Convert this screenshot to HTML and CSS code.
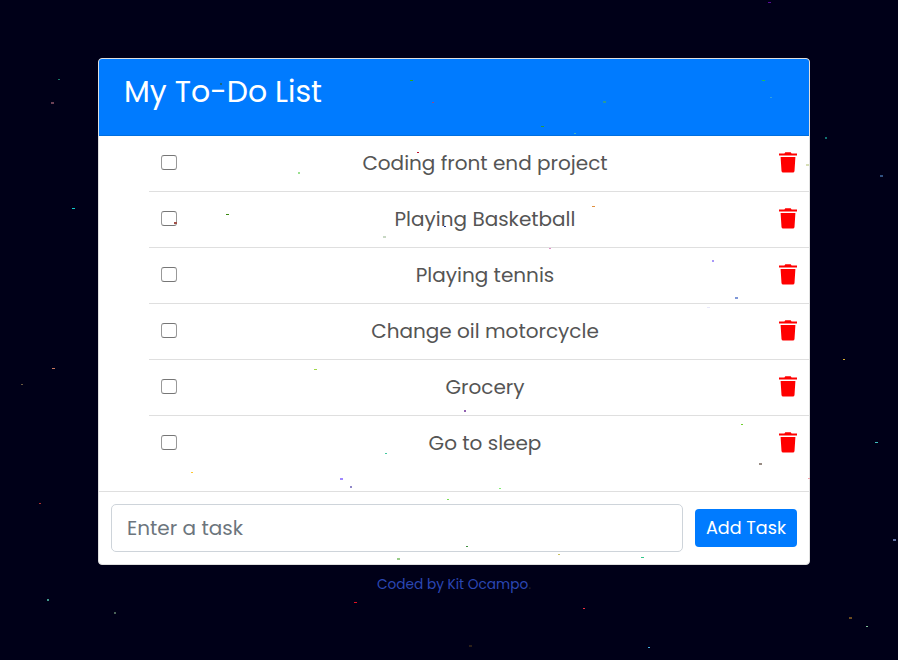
FILE: index.html
```html
<!DOCTYPE html>
<html lang="en">
<head>
<meta charset="utf-8">
<title>My To-Do List</title>
<link rel="stylesheet" href="styles.css">
</head>
<body>
<svg width="0" height="0" class="defs"><symbol id="trash" viewBox="0 0 18 21"><path d="M6.300 .3h5.400l.9 1.200H18v2H0v-2h5.400zM1.600 4.900h14.800l-.9 14q-.1 1.700-1.700 1.700H4.200q-1.600 0-1.700-1.700z"/></symbol></svg>
<main class="card">
  <header class="card-header"><h1>My To-Do List</h1></header>
  <ul class="list">
    <li><input type="checkbox"><span>Coding front end project</span><svg class="trash"><use href="#trash"/></svg></li>
    <li><input type="checkbox"><span>Playing Basketball</span><svg class="trash"><use href="#trash"/></svg></li>
    <li><input type="checkbox"><span>Playing tennis</span><svg class="trash"><use href="#trash"/></svg></li>
    <li><input type="checkbox"><span>Change oil motorcycle</span><svg class="trash"><use href="#trash"/></svg></li>
    <li><input type="checkbox"><span>Grocery</span><svg class="trash"><use href="#trash"/></svg></li>
    <li><input type="checkbox"><span>Go to sleep</span><svg class="trash"><use href="#trash"/></svg></li>
  </ul>
  <form class="card-footer">
    <input class="task" type="text" placeholder="Enter a task">
    <button type="button">Add Task</button>
  </form>
</main>
<p class="credit"><a>Coded by Kit Ocampo</a>.</p>
<svg class="particles" width="898" height="660" shape-rendering="crispEdges">
<path fill="#177a68" d="M58 79h2v1h-2z"/><path fill="#6b4155" d="M51 102h3v2h-3z"/><path fill="#1cc" d="M72 208h3v1h-3z"/><path fill="#3a8a10" d="M226 214h3v1h-3z"/><path fill="#1a6a80" d="M220 83h2v2h-2z"/><path fill="#9be090" d="M298 172h2v2h-2z"/>
<path fill="#3a1" d="M410 80h3v1h-3z"/><path fill="#94488a" d="M432 102h2v1h-2z"/><path fill="#2a9a40" d="M541 126h3v1h-3z"/><path fill="#4bb5b5" d="M574 133h2v1h-2z"/><path fill="#c0102a" d="M417 152h2v1h-2z"/><path fill="#e09040" d="M592 206h3v1h-3z"/>
<path fill="#5a0a9a" d="M768 2h3v1h-3z"/><path fill="#1cc060" d="M762 80h3v1h-3z"/><path fill="#30a0e0" d="M770 97h2v1h-2z"/><path fill="#2a9a9a" d="M603 101h3v2h-3z"/><path fill="#107070" d="M825 137h2v2h-2z"/><path fill="#305080" d="M880 175h3v2h-3z"/><path fill="#d8dfb8" d="M806 164h3v2h-3z"/>
<path fill="#a05048" d="M174 222h3v2h-3z"/><path fill="#c87860" d="M52 368h3v1h-3z"/><path fill="#6a5a40" d="M21 384h2v1h-2z"/>
<path fill="#223088" d="M444 226h2v1h-2z"/><path fill="#c8d8c4" d="M383 236h3v2h-3z"/><path fill="#e090c8" d="M549 248h2v1h-2z"/><path fill="#a0d848" d="M314 369h3v1h-3z"/><path fill="#9060b0" d="M464 410h2v2h-2z"/>
<path fill="#a898f8" d="M712 260h2v2h-2z"/><path fill="#8098d8" d="M735 297h3v2h-3z"/><path fill="#e8e8fa" d="M707 307h3v1h-3z"/><path fill="#d8b030" d="M843 359h2v1h-2z"/><path fill="#70d030" d="M741 424h2v1h-2z"/>
<path fill="#ffc830" d="M191 472h2v1h-2z"/><path fill="#b03030" d="M39 503h2v1h-2z"/><path fill="#40988c" d="M47 599h2v2h-2z"/><path fill="#4a6258" d="M114 612h2v2h-2z"/>
<path fill="#40c8a0" d="M385 453h2v1h-2z"/><path fill="#a088ff" d="M340 478h3v2h-3z"/><path fill="#9088c8" d="M350 486h2v2h-2z"/><path fill="#80f070" d="M499 488h2v1h-2z"/><path fill="#78e050" d="M447 499h2v1h-2z"/><path fill="#409040" d="M466 546h2v1h-2z"/><path fill="#c8c060" d="M558 554h2v1h-2z"/><path fill="#98cc88" d="M397 558h3v2h-3z"/><path fill="#e01020" d="M354 602h3v1h-3z"/><path fill="#f03040" d="M583 608h2v1h-2z"/><path fill="#2c2018" d="M469 645h3v2h-3z"/>
<path fill="#40c0c0" d="M875 442h3v1h-3z"/><path fill="#988c84" d="M759 463h3v2h-3z"/><path fill="#f0a0a8" d="M808 478h2v1h-2z"/><path fill="#6070a0" d="M893 539h3v2h-3z"/><path fill="#30c888" d="M641 557h3v1h-3z"/><path fill="#6a4a20" d="M849 617h3v2h-3z"/><path fill="#80c098" d="M866 626h2v1h-2z"/><path fill="#40b0e0" d="M648 647h2v1h-2z"/>
</svg>
</body>
</html>
```
FILE: styles.css
```css
* { box-sizing: border-box; }
html, body { height: 100%; }
body {
  margin: 0;
  padding: 58px 88px 0 98px;
  overflow: hidden;
  background: #000018;
  color: #212529;
  font-family: Poppins, Inter, "Liberation Sans", sans-serif;
}
.defs { position: absolute; }
.card {
  width: 712px;
  height: 507px;
  display: flex;
  flex-direction: column;
  background: #fff;
  border: 1px solid #dfdfdf;
  border-radius: 4px;
  overflow: hidden;
}
.card-header {
  flex: none;
  height: 77px;
  padding: 12px 25px;
  background: #007bff;
  border-bottom: 1px solid #006fdf;
  color: #fff;
}
h1 {
  margin: 0;
  font-size: 30px;
  line-height: 42px;
  font-weight: 400;
  white-space: nowrap;
}
.list {
  flex: none;
  height: 355px;
  margin: 0;
  padding: 0 0 0 50px;
  list-style: none;
}
.list li {
  height: 56px;
  display: flex;
  align-items: center;
  padding: 0 12px 2px;
  border-bottom: 1px solid #dfdfdf;
  color: #555;
  font-size: 20px;
}
.list li:last-child { border-bottom-color: transparent; }
.list input {
  appearance: none;
  width: 16px;
  height: 15px;
  margin: 0 0 1px;
  border: 1px solid #767676;
  border-left-color: #999;
  border-right-color: #999;
  border-radius: 3px;
  background: #fff;
  flex: none;
}
.list span { flex: 1; text-align: center; padding-left: 14px; line-height: 30px; }
.trash { width: 18px; height: 21px; margin-bottom: 1px; fill: #f00; flex: none; }
.card-footer {
  flex: none;
  height: 73px;
  margin: 0;
  padding: 0 12px;
  display: flex;
  align-items: center;
  gap: 12px;
  border-top: 1px solid #dfdfdf;
}
.task {
  flex: 1;
  height: 48px;
  padding: 0 15px;
  border: 1px solid #ced4da;
  border-radius: 5px;
  font: 20px/30px Poppins, Inter, sans-serif;
  color: #495057;
  background: #fff;
}
.task::placeholder { color: #6c757d; opacity: 1; }
button {
  width: 102px;
  height: 38px;
  padding: 0;
  border: 0;
  border-radius: 4px;
  background: #007bff;
  color: #fff;
  font: 17.6px/38px Poppins, Inter, sans-serif;
}
.credit {
  width: 712px;
  margin: 9px 0 0;
  text-align: center;
  font-size: 13.7px;
  line-height: 21px;
}
.credit a { color: #2b47b4; }
.particles { position: absolute; left: 0; top: 0; pointer-events: none; }
```
